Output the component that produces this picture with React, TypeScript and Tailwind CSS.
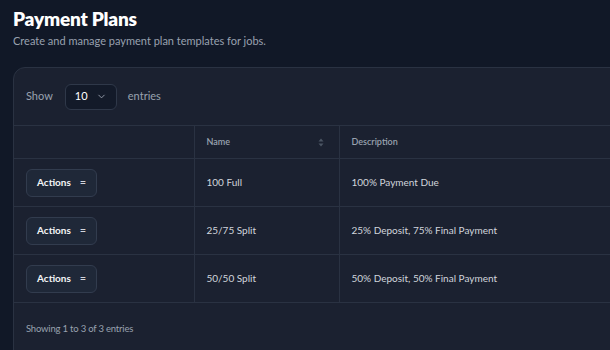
import { ChevronDown } from 'lucide-react';

const plans = [
  { id: 1, name: '100 Full', description: '100% Payment Due' },
  { id: 2, name: '25/75 Split', description: '25% Deposit, 75% Final Payment' },
  { id: 3, name: '50/50 Split', description: '50% Deposit, 50% Final Payment' },
];

export default function App() {
  return (
    <div
      className="min-h-screen bg-[#111827] overflow-hidden pl-[13px] pt-[7px]"
      style={{ fontFamily: 'Lato, "Noto Sans", sans-serif' }}
    >
      <h1 className="text-[19px] leading-[24px] font-extrabold text-white tracking-[-0.2px]">Payment Plans</h1>
      <p className="text-[11px] leading-[14px] text-gray-400 mt-[3px]">
        Create and manage payment plan templates for jobs.
      </p>

      {/* Table card */}
      <div className="mt-[19px] w-[640px] bg-[#1b2130] border border-[#2a3242] rounded-xl">
        <div className="flex items-center h-[57px] pl-[12px] text-[11px] text-gray-400">
          <span>Show</span>
          <div className="ml-[12px] mr-[11px] flex items-center justify-between w-[52px] h-[26px] px-[9px] bg-[#131a29] border border-[#2f3849] rounded-md text-white text-[11px]">
            <span>10</span>
            <ChevronDown size={11} className="text-gray-400" />
          </div>
          <span>entries</span>
        </div>

        <table className="w-full border-collapse table-fixed">
          <thead>
            <tr className="border-t border-b border-[#2a3242] h-[33px]">
              <th className="w-[180px] border-r border-[#2a3242]"></th>
              <th className="w-[145px] border-r border-[#2a3242] px-[12px] text-left text-[9px] font-semibold text-gray-400">
                <div className="flex items-center justify-between">
                  <span>Name</span>
                  <svg width="6" height="9" viewBox="0 0 6 9" className="mr-[3px]">
                    <path d="M3 0.5 L5.5 3.5 H0.5 Z" fill="#4b5563" />
                    <path d="M3 8.5 L5.5 5.5 H0.5 Z" fill="#4b5563" />
                  </svg>
                </div>
              </th>
              <th className="px-[12px] text-left text-[9px] font-semibold text-gray-400">Description</th>
            </tr>
          </thead>
          <tbody>
            {plans.map((plan) => (
              <tr key={plan.id} className="border-b border-[#2a3242] h-[48px]">
                <td className="border-r border-[#2a3242] pl-[12px]">
                  <button className="flex items-center gap-[9px] h-[28px] px-[10px] bg-[#1f2838] border border-[#323c4e] rounded-md text-[10px] font-bold text-gray-100">
                    Actions
                    <span className="text-[11px] font-normal text-gray-300">=</span>
                  </button>
                </td>
                <td className="border-r border-[#2a3242] px-[12px] text-[10px] text-gray-300">{plan.name}</td>
                <td className="px-[12px] text-[10px] text-gray-300">{plan.description}</td>
              </tr>
            ))}
          </tbody>
        </table>

        <div className="h-[60px] pl-[12px] pt-[19px] text-[9.5px] tracking-[-0.2px] text-gray-400">Showing 1 to 3 of 3 entries</div>
      </div>
    </div>
  );
}
